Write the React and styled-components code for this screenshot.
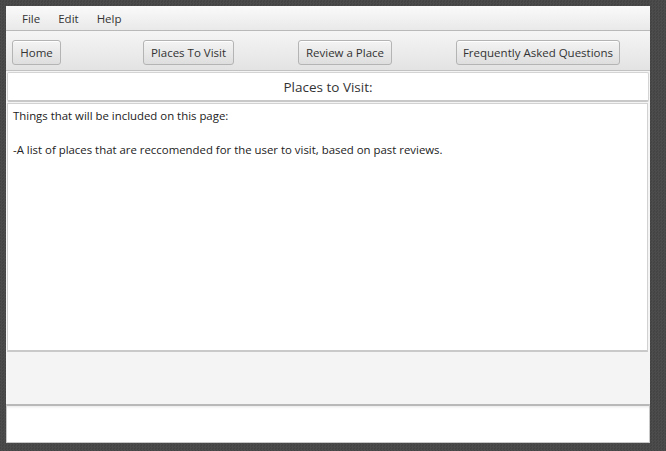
import styled, { createGlobalStyle } from "styled-components";

const GlobalStyle = createGlobalStyle`
  html, body {
    margin: 0;
    padding: 0;
    height: 100%;
    background: #484848;
    background-image: repeating-conic-gradient(#4c4c4c 0 25%, #444444 0 50%);
    background-size: 3px 3px;
  }
  #root {
    height: 100%;
  }
`;

const Stage = styled.div`
  height: 451px;
  padding: 6px 0 0 6px;
  box-sizing: border-box;
`;

const Window = styled.div`
  width: 644px;
  height: 437px;
  background: #f4f4f4;
  display: flex;
  flex-direction: column;
  font-family: "Open Sans", "Noto Sans", sans-serif;
  color: #333;
`;

const MenuBar = styled.div`
  height: 24px;
  display: flex;
  align-items: center;
  padding-left: 10px;
  background: linear-gradient(#fafafa, #e9e9e9);
  border-bottom: 1px solid #b9b9b9;
`;

const MenuItem = styled.span`
  font-size: 11.5px;
  padding: 0 6px;
  margin-right: 6px;
`;

const ToolBar = styled.div`
  height: 40px;
  display: flex;
  align-items: flex-start;
  padding: 9px 6px 0;
  box-sizing: border-box;
  background: linear-gradient(#f5f5f5, #e3e3e3);
  border-bottom: 1px solid #c2c2c2;
`;

const Button = styled.button`
  height: 25px;
  width: ${(p) => p.$w}px;
  margin-left: ${(p) => p.$ml}px;
  padding: 0;
  font-family: inherit;
  font-size: 11.5px;
  color: #333;
  border: 1px solid #b4b4b4;
  border-radius: 3px;
  background: linear-gradient(#f4f4f4, #dedede);
  box-shadow: inset 0 1px 0 #fff;
`;

const Header = styled.div`
  margin: 1px 1px 0 1px;
  height: 30px;
  box-sizing: border-box;
  background: #fff;
  border: 1px solid #d4d4d4;
  border-bottom: 2px solid #c8c8c8;
  border-radius: 2px;
  display: flex;
  align-items: center;
  justify-content: center;
  font-size: 13.5px;
`;

const TextArea = styled.div`
  margin: 1px 2px 0 1px;
  height: 249px;
  box-sizing: border-box;
  background: #fff;
  border: 1px solid #d2d2d2;
  border-bottom: 2px solid #c9c9c9;
  padding: 3px 5px;
  font-size: 11.4px;
  line-height: 17px;
  color: #222;
`;

const Line = styled.div`
  min-height: 17px;
  white-space: pre;
`;

const Spacer = styled.div`
  height: 52px;
`;

const Footer = styled.div`
  flex: 1;
  background: #fff;
  border: 1px solid #c8c8c8;
  border-top: 2px solid #b8b8b8;
  box-shadow: inset 0 3px 3px -2px #e6e6e6;
`;

export default function App() {
  return (
    <>
      <GlobalStyle />
      <Stage>
        <Window>
          <MenuBar>
            <MenuItem>File</MenuItem>
            <MenuItem>Edit</MenuItem>
            <MenuItem>Help</MenuItem>
          </MenuBar>
          <ToolBar>
            <Button $w={49} $ml={0}>Home</Button>
            <Button $w={91} $ml={82}>Places To Visit</Button>
            <Button $w={94} $ml={64}>Review a Place</Button>
            <Button $w={164} $ml={64}>Frequently Asked Questions</Button>
          </ToolBar>
          <Header>Places to Visit:</Header>
          <TextArea>
            <Line>Things that will be included on this page:</Line>
            <Line> </Line>
            <Line>-A list of places that are reccomended for the user to visit, based on past reviews.</Line>
          </TextArea>
          <Spacer />
          <Footer />
        </Window>
      </Stage>
    </>
  );
}
